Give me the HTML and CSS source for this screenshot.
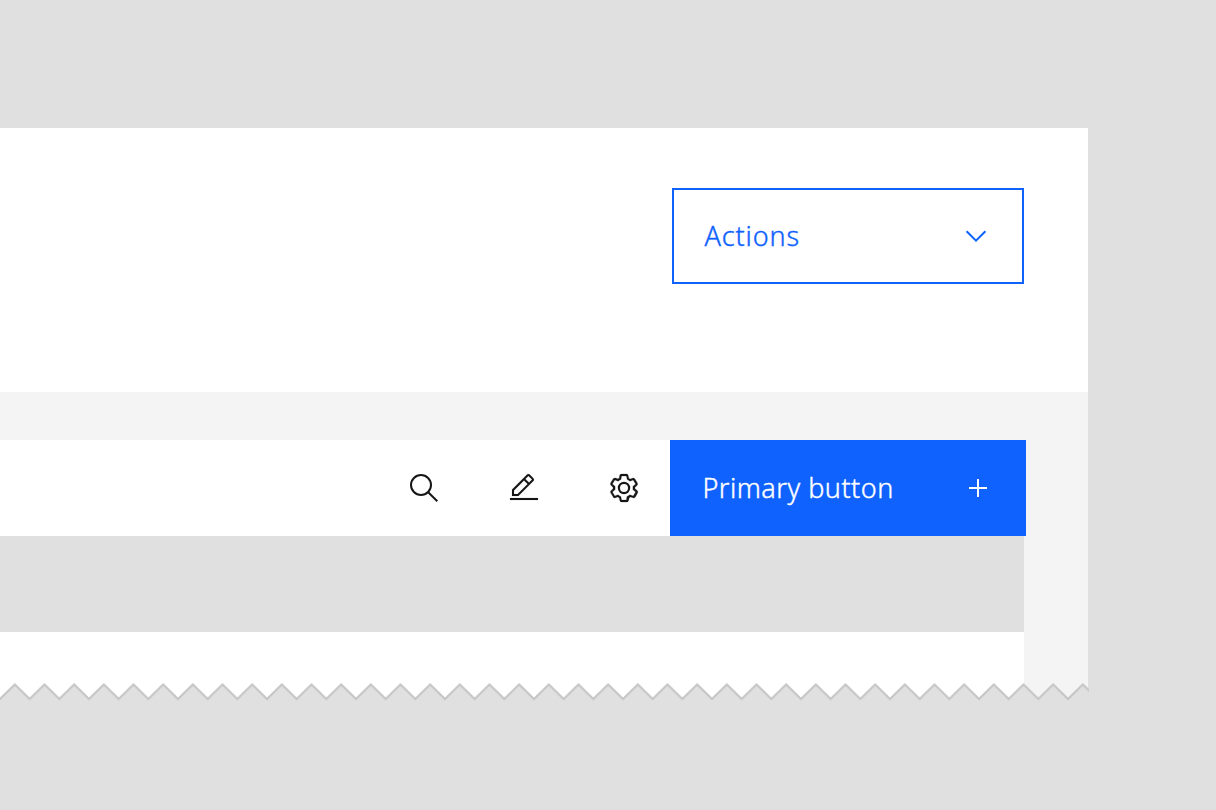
FILE: index.html
```
<!DOCTYPE html>
<html lang="en">
<head>
<meta charset="utf-8">
<title>Toolbar actions</title>
<link rel="stylesheet" href="styles.css">
</head>
<body>
<main class="page">
  <header class="header">
    <button class="button button-outline"><span class="label label-actions">Actions</span>
      <svg class="icon" viewBox="0 0 32 32"><path class="stroke" d="M6.600 11.200 16 20.600l9.400-9.400"/></svg>
    </button>
  </header>
  <section class="content">
    <div class="toolbar">
      <svg class="icon tool" viewBox="0 0 32 32"><circle class="stroke" cx="13" cy="13" r="10"/><path class="stroke" d="M20.200 20.200 29.300 29.300"/></svg>
      <svg class="icon tool" viewBox="0 0 32 32"><path class="pencil" d="M2 26H30V28H2zM25.400 9c.8-.8.8-2 0-2.800l-3.600-3.600c-.8-.8-2-.8-2.800 0l-15 15V24h6.400zM20.400 4 24 7.600l-3 3L17.400 7zM6 22v-3.600l10-10 3.600 3.600-10 10z"/></svg>
      <svg class="icon tool" viewBox="0 0 16 16"><path class="gear" fill-rule="evenodd" d="M13.500 8.400c0-.1 0-.3 0-.4 0-.1 0-.3 0-.4l1-.8c.4-.3.4-.9.2-1.300l-1.200-2C13.300 3.200 13 3 12.600 3c-.1 0-.2 0-.3.1l-1.200.4c-.2-.1-.4-.3-.7-.4l-.3-1.300C10.100 1.300 9.700 1 9.200 1H6.800c-.5 0-.9.3-1 .8L5.600 3.100c-.3.1-.5.2-.7.3L3.700 3C3.600 3 3.500 3 3.400 3 3 3 2.700 3.200 2.500 3.500l-1.200 2c-.2.4-.1.9.3 1.300l.9.8c0 .1 0 .3 0 .4 0 .1 0 .3 0 .4l-.9.8c-.4.3-.5.900-.2 1.300l1.200 2C2.700 12.800 3 13 3.400 13c.1 0 .2 0 .3-.1l1.200-.4c.2.1.4.3.7.4l.3 1.300c.1.5.5.8 1 .8h2.400c.5 0 .9-.3 1-.8l.3-1.300c.2-.1.4-.2.7-.4l1.200.4c.1 0 .2.1.3.1.4 0 .7-.2.9-.5l1.100-2c.2-.4.2-.9-.2-1.300zM12.600 12l-1.700-.6c-.4.3-.9.6-1.400.8L9.200 14H6.800l-.4-1.800c-.5-.2-.9-.5-1.400-.8L3.400 12l-1.200-2 1.400-1.200c-.1-.5-.1-1.100 0-1.600L2.200 6l1.200-2 1.700.6C5.500 4.200 6 4 6.500 3.800L6.800 2h2.400l.4 1.800c.5.2.9.5 1.400.8L12.600 4l1.200 2-1.400 1.200c.1.5.1 1.100 0 1.600l1.400 1.200z"/><circle class="hub" cx="8" cy="8" r="2.550"/></svg>
      <button class="button button-primary"><span class="label label-primary">Primary button</span>
        <svg class="icon" viewBox="0 0 32 32"><path class="stroke" d="M16 7v18M7 16h18"/></svg>
      </button>
    </div>
    <div class="table-head"></div>
    <div class="table-body"></div>
  </section>
  <svg class="tear" viewBox="0 0 1089 22">
    <defs><pattern id="teeth" width="29.667" height="22" patternUnits="userSpaceOnUse"><path class="tear-fill" d="M0 19 14.833 4.500 29.667 19V22H0z"/><path class="tear-line" d="M-2 17.050 0 19 14.833 4.500 29.667 19l2-1.950"/></pattern></defs>
    <rect width="1089" height="22" fill="url(#teeth)"/>
  </svg>
</main>
</body>
</html>
```
FILE: styles.css
```
* { box-sizing: border-box; }
body { margin: 0; background: #e0e0e0; font-family: "Noto Sans", sans-serif; }
.page { width: 1089px; height: 810px; padding-top: 128px; overflow: hidden; }
.header { width: 1088px; height: 264px; padding: 60px 64px 0; display: flex; justify-content: flex-end; align-items: flex-start; background: #fff; }
.content { width: 1088px; height: 310px; padding-top: 48px; background: #f4f4f4; }
.button { display: flex; align-items: center; justify-content: space-between; height: 96px; margin: 0; border: 0; border-radius: 0; font: inherit; text-align: left; }
.button-outline { width: 352px; padding: 0 30px; border: 2px solid #0f62fe; background: #fff; color: #0f62fe; }
.button-primary { width: 356px; padding: 0 32px; background: #0f62fe; color: #fff; }
.label { font-size: 27px; line-height: 36px; font-weight: 300; white-space: nowrap; -webkit-text-stroke: .4px currentColor; }
.label-actions { padding-left: .6px; letter-spacing: .85px; }
.label-primary { padding-left: .4px; letter-spacing: .5px; }
.icon { display: block; flex: none; width: 32px; height: 32px; }
.stroke { fill: none; stroke: currentColor; stroke-width: 2; }
.pencil { fill: currentColor; stroke: currentColor; stroke-width: .1; }
.gear { fill: currentColor; stroke: currentColor; stroke-width: .12; }
.hub { fill: none; stroke: currentColor; stroke-width: 1.1; }
.toolbar { width: 1026px; height: 96px; display: flex; justify-content: flex-end; align-items: center; background: #fff; color: #161616; }
.tool { margin-right: 68px; }
.tool:nth-of-type(3) { margin-right: 30px; }
.table-head { width: 1024px; height: 96px; background: #e0e0e0; }
.table-body { width: 1024px; height: 70px; background: #fff; }
.tear { display: block; width: 1089px; height: 22px; margin-top: -22px; }
.tear-fill { fill: #e0e0e0; }
.tear-line { fill: none; stroke: #c6c6c6; stroke-width: 2; }
```
